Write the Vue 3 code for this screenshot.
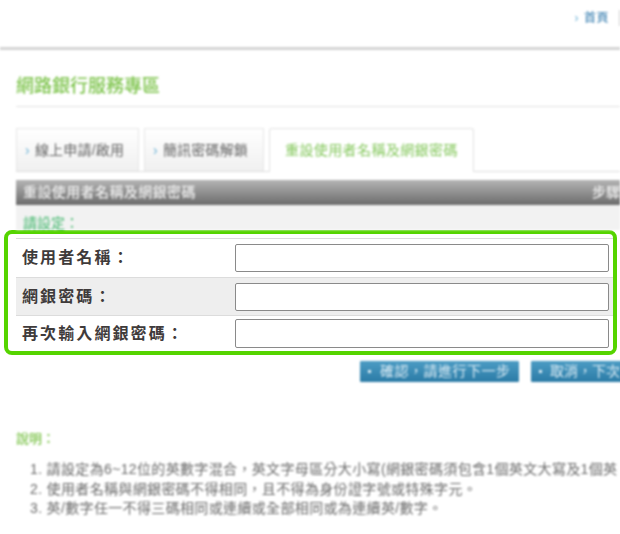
<script setup>
const rows = [
  { label: '使用者名稱：', alt: false },
  { label: '網銀密碼：', alt: true },
  { label: '再次輸入網銀密碼：', alt: false },
]
const notes = [
  '1. 請設定為6~12位的英數字混合，英文字母區分大小寫(網銀密碼須包含1個英文大寫及1個英',
  '2. 使用者名稱與網銀密碼不得相同，且不得為身份證字號或特殊字元。',
  '3. 英/數字任一不得三碼相同或連續或全部相同或為連續英/數字。',
]
</script>

<template>
  <div class="page">
    <div class="soft top">
      <header class="head">
        <span class="home"><i class="arrow">›</i>首頁</span>
      </header>
      <section class="intro">
        <h1 class="title">網路銀行服務專區</h1>
        <nav class="tabs">
          <span class="tab"><i class="arrow">›</i>線上申請/啟用</span>
          <span class="tab second"><i class="arrow">›</i>簡訊密碼解鎖</span>
          <span class="tab active">重設使用者名稱及網銀密碼</span>
        </nav>
        <div class="bar">
          <span>重設使用者名稱及網銀密碼</span>
          <span class="step">步驟</span>
        </div>
        <div class="prompt">請設定：</div>
      </section>
    </div>

    <div class="focus">
      <div v-for="row in rows" :key="row.label" class="row" :class="{ alt: row.alt }">
        <label class="label">{{ row.label }}</label>
        <input class="field" type="text" />
      </div>
    </div>

    <div class="soft bottom">
      <div class="actions">
        <span class="btn"><i class="dot"></i>確認，請進行下一步</span>
        <span class="btn next"><i class="dot"></i>取消，下次</span>
      </div>
      <div class="notes-title">說明：</div>
      <ol class="notes">
        <li v-for="n in notes" :key="n">{{ n }}</li>
      </ol>
    </div>
  </div>
</template>

<style>
html, body { margin: 0; background: #fff; overflow: hidden; }
</style>

<style scoped>
.page {
  width: 620px;
  height: 534px;
  overflow: hidden;
  background: #fff;
  font-family: "Liberation Sans", "Noto Sans CJK TC", sans-serif;
}
.soft { filter: blur(1.1px); }
.top { height: 230px; }
.head {
  height: 47px;
  border-bottom: 3px solid #d4d4d4;
  display: flex;
  justify-content: flex-end;
  align-items: flex-start;
}
.home {
  font-size: 12px;
  line-height: 16px;
  margin-top: 10px;
  color: #4d8cb8;
  white-space: nowrap;
  padding-right: 10px;
  border-right: 1px solid #ccc;
  font-weight: 500;
  letter-spacing: 0.5px;
}
.arrow {
  font-style: normal;
  color: #6fb3d6;
  margin-right: 5px;
}
.intro { padding: 0 0 0 16px; }
.title {
  margin: 0;
  height: 57px;
  box-sizing: border-box;
  padding-top: 24px;
  border-bottom: 1px solid #e2e2e2;
  font-size: 18px;
  line-height: 24px;
  font-weight: 500;
  color: #80c550;
}
.tabs {
  display: flex;
  align-items: flex-end;
  margin-top: 22px;
  height: 43px;
  border-bottom: 1px solid #ddd;
  box-sizing: border-box;
}
.tab {
  height: 43px;
  box-sizing: border-box;
  border: 1px solid #e6e6e6;
  border-bottom: 0;
  background: linear-gradient(#fff, #f0f0f0);
  font-size: 14px;
  line-height: 43px;
  color: #666;
  padding-left: 8px;
  width: 123px;
  margin-right: 5px;
  white-space: nowrap;
  letter-spacing: 0.2px;
}
.tab.second { width: 120px; margin-right: 5px; }
.tab.active {
  width: 205px;
  margin: 0 0 -1px;
  height: 44px;
  padding-left: 15px;
  background: #fff;
  color: #86c85e;
  border-color: #e2e2e2;
  border-radius: 3px 3px 0 0;
  letter-spacing: 0.4px;
}
.bar {
  margin-top: 8px;
  height: 25px;
  display: flex;
  justify-content: space-between;
  padding: 0 0 0 7px;
  background: linear-gradient(#b4b4b4, #6c6c6c);
  color: #eee;
  font-size: 14px;
  line-height: 24px;
  font-weight: 500;
  letter-spacing: 0.4px;
  white-space: nowrap;
}
.step { width: 28px; letter-spacing: 0; }
.prompt {
  height: 25px;
  background: #f2f2f2;
  padding-left: 7px;
  font-size: 14px;
  line-height: 36px;
  font-weight: 500;
  color: #5cc080;
}
.focus {
  width: 605px;
  height: 117px;
  margin-left: 4px;
  border: 4px solid #55d400;
  border-radius: 8px;
  background: #fff;
  overflow: hidden;
  display: flex;
  flex-direction: column;
  justify-content: flex-end;
}
.row {
  height: 38px;
  flex: none;
  display: flex;
  align-items: center;
  justify-content: space-between;
  margin-left: 8px;
  border-top: 1px solid #dcdcdc;
  box-sizing: border-box;
  padding: 0 4px 0 6px;
  background: #fff;
}
.row:first-child { height: 39px; }
.row:last-child { height: 36px; }
.row.alt { background: #eeeeee; }
.label {
  font-size: 16px;
  line-height: 20px;
  font-weight: 700;
  letter-spacing: 2.1px;
  color: #3f3b3b;
  white-space: nowrap;
  font-family: "Noto Sans CJK TC", sans-serif;
  position: relative;
  top: -2px;
}
.field {
  width: 374px;
  height: 28px;
  box-sizing: border-box;
  border: 1px solid #8a8a8a;
  border-radius: 2px;
  background: #fff;
  padding: 0;
  margin: 0;
}
.row:last-child .field { height: 29px; }
.bottom { padding-left: 16px; }
.actions {
  display: flex;
  padding-left: 344px;
  margin-top: 6px;
  white-space: nowrap;
}
.btn {
  flex: none;
  width: 159px;
  height: 21px;
  box-sizing: border-box;
  background: linear-gradient(#4c9cc4, #2b7ba6);
  color: #dcecf5;
  font-size: 14px;
  line-height: 21px;
  letter-spacing: 0.5px;
  border-radius: 1px;
  padding-left: 8px;
  display: flex;
  align-items: center;
}
.btn.next { margin-left: 12px; letter-spacing: 0; }
.btn.next .dot { margin-right: 8px; }
.dot {
  width: 3px;
  height: 3px;
  background: #dcecf5;
  margin-right: 9px;
  flex: none;
}
.notes-title {
  margin-top: 48px;
  font-size: 13px;
  line-height: 18px;
  font-weight: 500;
  color: #80c550;
}
.notes {
  list-style: none;
  margin: 12px 0 0;
  padding: 0 0 0 14px;
  font-size: 14px;
  line-height: 19.5px;
  letter-spacing: 0.35px;
  color: #6a6a6a;
  white-space: nowrap;
}
</style>
